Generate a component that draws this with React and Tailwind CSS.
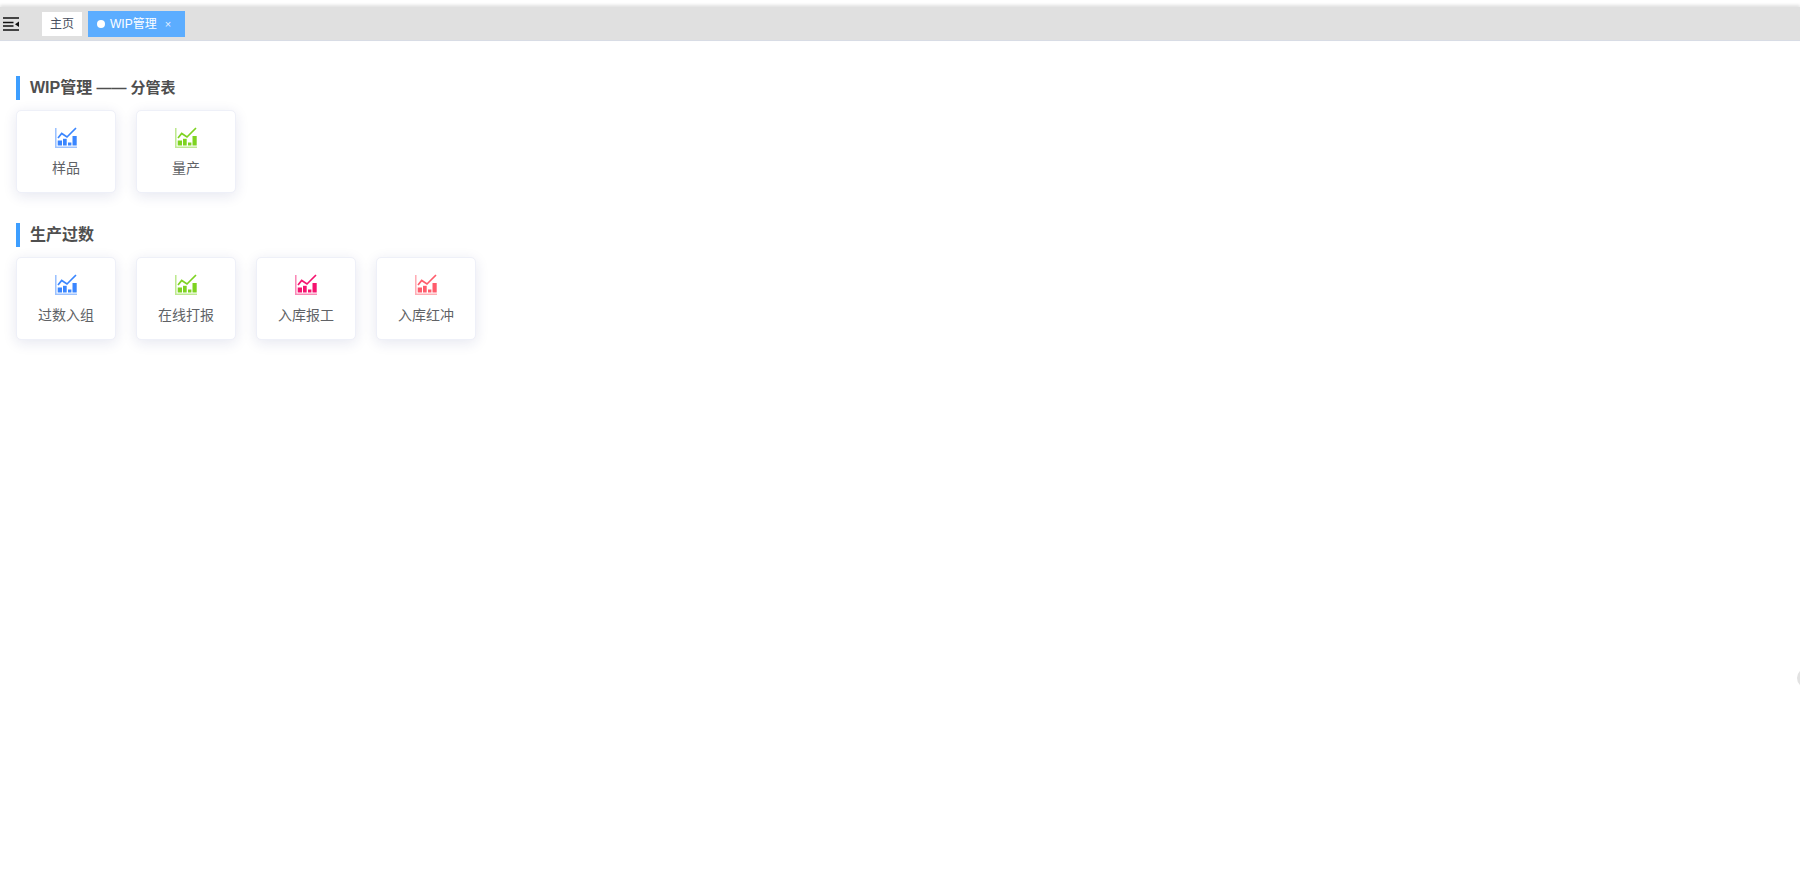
import React from 'react'

const sections = [
  {
    title: 'WIP管理',
    sub: ' —— 分管表',
    items: [
      { label: '样品', color: '#3a86ff' },
      { label: '量产', color: '#7ed321' },
    ],
  },
  {
    title: '生产过数',
    items: [
      { label: '过数入组', color: '#3a86ff' },
      { label: '在线打报', color: '#7ed321' },
      { label: '入库报工', color: '#f5136f' },
      { label: '入库红冲', color: '#ff5c6c' },
    ],
  },
]

const ChartIcon = ({ color }) => (
  <svg width="22" height="21" viewBox="0 0 22 21" fill="none">
    <path d="M0.75 1V20.2H22" stroke={color} strokeOpacity="0.5" strokeWidth="1.6" />
    <path d="M3 11L6.7 6.5L12 10L21 1" stroke={color} strokeWidth="1.7" />
    <rect x="2.7" y="13.5" width="4.3" height="5" fill={color} />
    <rect x="8" y="11.8" width="3.7" height="6.7" fill={color} />
    <rect x="13" y="15.5" width="3.4" height="3" fill={color} />
    <rect x="17.5" y="9" width="4.2" height="9.5" fill={color} />
  </svg>
)

const Card = ({ label, color }) => (
  <div className="flex h-[83px] w-[100px] flex-col items-center rounded-[5px] border border-[#eef0f8] bg-white pt-[16px] shadow-[0_3px_14px_0_rgba(30,40,120,0.11)]">
    <ChartIcon color={color} />
    <span className="mt-[10px] text-[14px] leading-[20px] text-[#606266]">{label}</span>
  </div>
)

const App = () => {
  return (
    <div className="relative h-[891px] overflow-hidden bg-white font-['Liberation_Sans','Noto_Sans_CJK_SC',sans-serif]">
      <div className="pt-[7px]">
        <div className="flex h-[34px] items-center border-b border-[#d8dce5] bg-[#e0e0e0] shadow-[0_-2px_3px_rgba(0,0,0,0.12)]">
          <svg className="ml-[3px]" width="16" height="14" viewBox="0 0 16 14" fill="none">
            <path d="M0 1H16M0 5.5H10.5M0 9H10.5M0 13H16" stroke="#111" strokeWidth="1.5" />
            <path d="M16 4.5V10L12 7.2Z" fill="#111" />
          </svg>
          <div className="ml-[23px] flex h-[24px] w-[40px] items-center justify-center bg-white text-[12px] text-[#495060]">
            主页
          </div>
          <div className="ml-[6px] flex h-[26px] w-[97px] items-center bg-[#5cadff] pl-[9px] text-[12px] text-white">
            <span className="h-[8px] w-[8px] rounded-full bg-white" />
            <span className="ml-[5px]">WIP管理</span>
            <span className="ml-[8px] pt-[2px] text-[11px] text-[#e5f1ff]">×</span>
          </div>
        </div>
      </div>

      <div className="flex flex-col gap-[30px] pl-[16px] pt-[35px]">
        {sections.map((section) => (
          <div key={section.title}>
            <div className="flex h-[24px] items-center whitespace-pre border-l-4 border-[#3d9eff] pl-[10px] text-[16px] font-bold text-[#4f4f4f]">
              {section.title}
              {section.sub && <span className="text-[15px]">{section.sub}</span>}
            </div>
            <div className="mt-[10px] flex gap-[20px]">
              {section.items.map((item) => (
                <Card key={item.label} label={item.label} color={item.color} />
              ))}
            </div>
          </div>
        ))}
      </div>

      <div className="absolute right-[-17px] top-[668px] h-[20px] w-[20px] rounded-full bg-[#e2e2e2]" />
    </div>
  )
}

export default App
